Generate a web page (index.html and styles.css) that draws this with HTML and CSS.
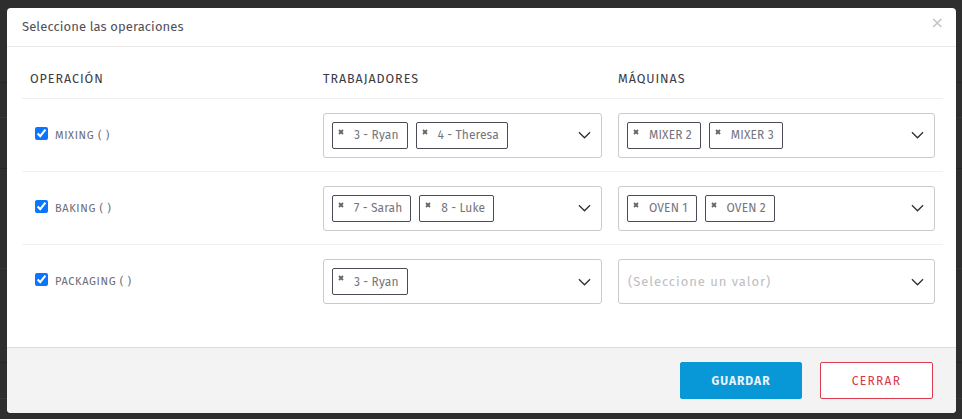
FILE: index.html
```html
<!DOCTYPE html>
<html lang="es">
<head>
<meta charset="utf-8">
<title>Seleccione las operaciones</title>
<link rel="stylesheet" href="styles.css">
</head>
<body>
<div class="modal">
  <div class="modal-header">
    <span class="title">Seleccione las operaciones</span>
    <span class="close">×</span>
  </div>
  <div class="modal-body">
    <div class="grid">
      <div class="th">OPERACIÓN</div>
      <div class="th">TRABAJADORES</div>
      <div class="th">MÁQUINAS</div>

      <div class="td op"><input type="checkbox" checked><span>MIXING ( )</span></div>
      <div class="td">
        <div class="select">
          <span class="tag"><svg class="x" viewBox="0 0 6 6"><path d="M1 1L5 5M5 1L1 5"/></svg>3 - Ryan</span>
          <span class="tag"><svg class="x" viewBox="0 0 6 6"><path d="M1 1L5 5M5 1L1 5"/></svg>4 - Theresa</span>
          <svg class="chev" viewBox="0 0 14 8"><path d="M1 1L7 7L13 1"/></svg>
        </div>
      </div>
      <div class="td">
        <div class="select">
          <span class="tag"><svg class="x" viewBox="0 0 6 6"><path d="M1 1L5 5M5 1L1 5"/></svg>MIXER 2</span>
          <span class="tag"><svg class="x" viewBox="0 0 6 6"><path d="M1 1L5 5M5 1L1 5"/></svg>MIXER 3</span>
          <svg class="chev" viewBox="0 0 14 8"><path d="M1 1L7 7L13 1"/></svg>
        </div>
      </div>

      <div class="td op"><input type="checkbox" checked><span>BAKING ( )</span></div>
      <div class="td">
        <div class="select">
          <span class="tag"><svg class="x" viewBox="0 0 6 6"><path d="M1 1L5 5M5 1L1 5"/></svg>7 - Sarah</span>
          <span class="tag"><svg class="x" viewBox="0 0 6 6"><path d="M1 1L5 5M5 1L1 5"/></svg>8 - Luke</span>
          <svg class="chev" viewBox="0 0 14 8"><path d="M1 1L7 7L13 1"/></svg>
        </div>
      </div>
      <div class="td">
        <div class="select">
          <span class="tag"><svg class="x" viewBox="0 0 6 6"><path d="M1 1L5 5M5 1L1 5"/></svg>OVEN 1</span>
          <span class="tag"><svg class="x" viewBox="0 0 6 6"><path d="M1 1L5 5M5 1L1 5"/></svg>OVEN 2</span>
          <svg class="chev" viewBox="0 0 14 8"><path d="M1 1L7 7L13 1"/></svg>
        </div>
      </div>

      <div class="td op last"><input type="checkbox" checked><span>PACKAGING ( )</span></div>
      <div class="td last">
        <div class="select">
          <span class="tag"><svg class="x" viewBox="0 0 6 6"><path d="M1 1L5 5M5 1L1 5"/></svg>3 - Ryan</span>
          <svg class="chev" viewBox="0 0 14 8"><path d="M1 1L7 7L13 1"/></svg>
        </div>
      </div>
      <div class="td last">
        <div class="select">
          <span class="placeholder">(Seleccione un valor)</span>
          <svg class="chev" viewBox="0 0 14 8"><path d="M1 1L7 7L13 1"/></svg>
        </div>
      </div>
    </div>
  </div>
  <div class="modal-footer">
    <button class="btn btn-primary">GUARDAR</button>
    <button class="btn btn-outline">CERRAR</button>
  </div>
</div>
</body>
</html>
```

FILE: styles.css
```css
* { box-sizing: border-box; }

html, body { height: 100%; }

body {
  margin: 0;
  padding: 8px 6px 6px 7px;
  font-family: "Fira Sans", "Lato", "Noto Sans", sans-serif;
  background-color: #2e2e2e;
  background-image:
    linear-gradient(#262626, #262626),
    linear-gradient(#383838, #383838),
    linear-gradient(#262626, #262626),
    linear-gradient(#383838, #383838),
    linear-gradient(#262626, #262626),
    linear-gradient(#383838, #383838);
  background-repeat: no-repeat;
  background-size: 100% 1px;
  background-position: 0 82px, 0 117px, 0 168px, 0 268px, 0 362px, 0 398px;
}

.modal {
  width: 949px;
  height: 405px;
  background: #fff;
  border-radius: 4px;
  display: flex;
  flex-direction: column;
  overflow: hidden;
}

.modal-header {
  height: 39px;
  border-bottom: 1px solid #e9e9e9;
  display: flex;
  align-items: center;
  justify-content: space-between;
  padding: 0 12px 2px 15px;
}

.title {
  font-size: 13px;
  color: #505058;
  letter-spacing: 0.1px;
}

.close {
  font-family: "DejaVu Sans", sans-serif;
  font-size: 16px;
  color: #c4c4c4;
  margin-top: -8px;
}

.modal-body {
  flex: 1;
  padding: 12px 13px 0 15px;
}

.grid {
  display: grid;
  grid-template-columns: 293px 295px 333px;
  grid-template-rows: 40px 73px 73px 73px;
}

.th {
  padding: 0 8px 1px;
  display: flex;
  align-items: center;
  font-size: 12.5px;
  letter-spacing: 0.95px;
  color: #3b3b44;
  border-bottom: 1px solid #efefef;
}

.td {
  padding: 0 8px;
  display: flex;
  align-items: center;
  border-bottom: 1px solid #f1f1f1;
}

.td.last { border-bottom: none; }

.op { padding-left: 13px; }

.op input {
  margin: 0 7px 4px 0;
  width: 13px;
  height: 13px;
  accent-color: #0a75ff;
}

.op span {
  font-size: 11px;
  color: #6b6b74;
  letter-spacing: 0.65px;
}

.select {
  width: 100%;
  height: 45px;
  border: 1px solid #c9c9ce;
  border-radius: 3px;
  display: flex;
  align-items: center;
  gap: 8px;
  padding: 0 8px;
}

.tag {
  height: 27px;
  border: 1px solid #4b4b55;
  border-radius: 2px;
  display: flex;
  align-items: center;
  padding: 0 8px 0 5px;
  font-size: 12px;
  color: #74747c;
  letter-spacing: 0.1px;
  gap: 10px;
}

.x {
  width: 6px;
  height: 6px;
  align-self: flex-start;
  margin-top: 6px;
  stroke: #666;
  stroke-width: 1.8;
  fill: none;
}

.placeholder {
  font-size: 13px;
  color: #bdbdc2;
  letter-spacing: 0.95px;
  padding-left: 1px;
}

.chev {
  margin-left: auto;
  margin-right: 2px;
  width: 13px;
  height: 8px;
  stroke: #2f2f36;
  stroke-width: 1.4;
  fill: none;
}

.modal-footer {
  height: 66px;
  background: #f3f3f3;
  border-top: 1px solid #dcdcdc;
  display: flex;
  justify-content: flex-end;
  align-items: flex-start;
  gap: 18px;
  padding: 14px 23px 0 0;
}

.btn {
  height: 37px;
  font-family: inherit;
  font-size: 12px;
  font-weight: bold;
  letter-spacing: 1px;
  border-radius: 2px;
  cursor: pointer;
}

.btn-primary {
  width: 122px;
  background: #0897d7;
  border: 1px solid #0897d7;
  color: #e8f4fb;
}

.btn-outline {
  width: 113px;
  background: #fff;
  border: 1px solid #dc3a4f;
  color: #d9364b;
  font-weight: normal;
  letter-spacing: 1.3px;
}
```
